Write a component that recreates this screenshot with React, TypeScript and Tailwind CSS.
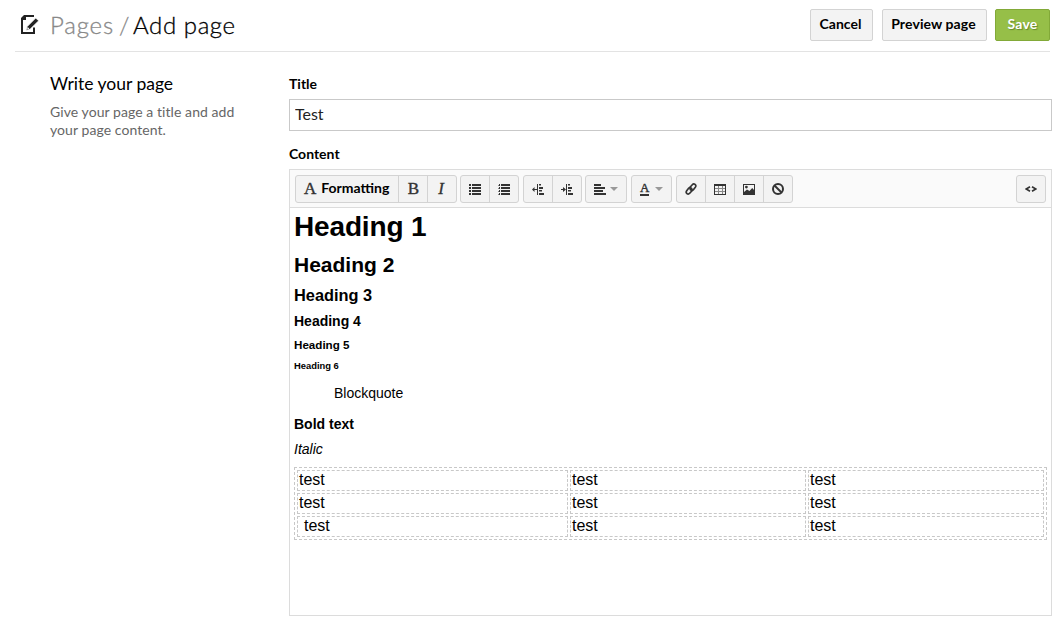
import type { ReactNode } from "react";

const ui = "font-['Lato',sans-serif]";

function Group({ children, className = "" }: { children: ReactNode; className?: string }) {
  return (
    <div className={`flex h-7 shrink-0 divide-x divide-[#d3d3d3] rounded-[3px] border border-[#d3d3d3] bg-[#f3f3f3] ${className}`}>
      {children}
    </div>
  );
}

function Tool({ children, label }: { children: ReactNode; label: string }) {
  return (
    <button aria-label={label} className="flex flex-1 items-center justify-center text-[#333]">
      {children}
    </button>
  );
}

function ListIcon({ numbered = false }: { numbered?: boolean }) {
  return (
    <svg width="12" height="11" viewBox="0 0 12 11" fill="#333" shapeRendering="crispEdges">
      {[0, 3, 6, 9].map((y) => (
        <g key={y}>
          <rect x={numbered ? 1 : 0} y={y} width={numbered ? 1 : 2} height="2" />
          {numbered && <rect x="0" y={y + 1} width="1" height="1" fill="#888" />}
          <rect x="3" y={y} width="9" height="2" />
        </g>
      ))}
    </svg>
  );
}

function IndentIcon({ right = false }: { right?: boolean }) {
  return (
    <svg width="12" height="11" viewBox="0 0 12 11" fill="#333">
      <path d="M5 0h1v11H5zM7 0h2v1.6H7zM7 3h4v2H7zM7 6h3v1.6H7zM7 9h5v2H7z" />
      <path d={right ? "M0 5h2V3l3 2.5L2 8V6H0z" : "M5 5H2.500V3L0 5.500 2.500 8V6H5z"} />
    </svg>
  );
}

function Caret() {
  return (
    <svg width="8" height="4" viewBox="0 0 8 4" fill="#999">
      <path d="M0 0h8L4 4z" />
    </svg>
  );
}

function Cell({ indent = false }: { indent?: boolean }) {
  return (
    <div className={`h-[21px] border border-dashed border-[#c8c8c8] text-base leading-[17px] ${indent ? "pl-[6px]" : "pl-px"}`}>
      test
    </div>
  );
}

export default function App() {
  return (
    <div className={`h-[621px] w-[1060px] overflow-hidden bg-white text-black ${ui}`}>
      <header className="ml-[15px] flex h-[52px] w-[1035px] items-start border-b border-[#e3e3e3]">
        <svg className="mt-[15px] ml-[5px]" width="20" height="20" viewBox="0 0 20 20">
          <path d="M14 1H5.500L2 4.500V18h12v-5.500" fill="none" stroke="#222" strokeWidth="2" />
          <path d="M1 0h5v5H1z" fill="#222" />
          <path d="M0 0h4L0 4z" fill="#fff" />
          <path d="M6 15.500l1.200-4L15.700 3l3 2.800-8.700 8.500z" fill="#222" stroke="#fff" strokeWidth=".8" />
          <path d="M7.700 12l1.700 1.700-2.300.8z" fill="#fff" />
        </svg>
        <h1 className="mt-[9px] ml-[10px] flex flex-1 text-2xl leading-8 font-light">
          <span className="w-[69px] tracking-[0.8px] text-[#888] [-webkit-text-stroke:0.3px_#888]">Pages</span>
          <span className="w-[14px] text-[#888] [-webkit-text-stroke:0.3px_#888]">/</span>
          <span className="tracking-[0.6px] [-webkit-text-stroke:0.3px_#000]">Add page</span>
        </h1>
        <div className="mt-[9px] flex text-sm leading-[28px] font-bold">
          <button className="mr-[9px] h-8 w-[63px] rounded-xs border border-[#d3d3d3] bg-[#f3f3f3] pr-[2px] pb-[2px]">Cancel</button>
          <button className="mr-2 h-8 w-[105px] rounded-xs border border-[#d3d3d3] bg-[#f3f3f3] pr-[2px] pb-[2px] tracking-[0.1px]">Preview page</button>
          <button className="h-8 w-[55px] rounded-xs border border-[#82a938] bg-[#96bf48] pb-[2px] tracking-[0.2px] text-white [text-shadow:1px_1px_1px_#67882c]">Save</button>
        </div>
      </header>
      <main className="flex">
        <aside className="ml-[50px] w-[239px] pt-[20px]">
          <h2 className="text-[17.5px] leading-6">Write your page</h2>
          <p className="mt-[7px] text-sm leading-[18px] tracking-[0.07px] text-[#666]">
            Give your page a title and add
            <br />
            your page content.
          </p>
        </aside>
        <section className="w-[763px] pt-[22px]">
          <label className="mb-px block h-6 text-sm leading-5 font-bold">Title</label>
          <input className="block h-8 w-full border border-[#c9c9c9] px-[5px] pb-[3px] text-base text-[#222]" defaultValue="Test" />
          <label className="mt-[13px] mb-px block h-6 text-sm leading-5 font-bold">Content</label>
          <div className="h-[447px] border border-[#dcdcdc]">
            <div className="flex h-[38px] items-start border-b border-[#dcdcdc] bg-[#fafafa] px-[5px] pt-[5px]">
              <Group className="mr-[3px] w-[162px]">
                <button className="flex w-[103px] items-center pl-2 text-sm font-bold">
                  <span className="mr-[5px] font-['Liberation_Serif',serif] text-[17px] font-normal text-[#333] [-webkit-text-stroke:0.4px_#333]">A</span>
                  <span className="pb-[2px]">Formatting</span>
                </button>
                <Tool label="Bold"><span className="ml-px font-['Liberation_Serif',serif] text-[17px] [-webkit-text-stroke:0.4px_#333]">B</span></Tool>
                <Tool label="Italic"><span className="mr-[2px] font-['Liberation_Serif',serif] text-[17px] italic [-webkit-text-stroke:0.3px_#333]">I</span></Tool>
              </Group>
              <Group className="mr-1 w-[59px]">
                <Tool label="Bulleted list"><ListIcon /></Tool>
                <Tool label="Numbered list"><ListIcon numbered /></Tool>
              </Group>
              <Group className="mr-[3px] w-[59px]">
                <Tool label="Outdent"><IndentIcon /></Tool>
                <Tool label="Indent"><IndentIcon right /></Tool>
              </Group>
              <Group className="mr-1 w-[42px]">
                <Tool label="Alignment">
                  <svg className="mr-1" width="12" height="11" fill="#333" shapeRendering="crispEdges">
                    <path d="M0 0h7v2H0zM0 3h11v2H0zM0 6h9v2H0zM0 9h12v2H0z" />
                  </svg>
                  <Caret />
                </Tool>
              </Group>
              <Group className="mr-1 w-[41px]">
                <Tool label="Text colour">
                  <span className="mr-[6px] h-[13px] w-[9px] border-b-2 border-[#333] text-center font-['Liberation_Serif',serif] text-[13px] leading-[10px] [-webkit-text-stroke:0.4px_#333]">A</span>
                  <Caret />
                </Tool>
              </Group>
              <Group className="w-[117px]">
                <Tool label="Link">
                  <svg width="12" height="12" viewBox="0 0 12 12" fill="none" stroke="#333" strokeWidth="1.7" strokeLinecap="round">
                    <path d="M5 4.300l2.300-2.600c1.700-1.900 4.600.3 3 2.600L8.400 6.700c-1.200 1.300-3.400.4-3.300-1.200" />
                    <path d="M7 7.700l-2.300 2.600c-1.700 1.900-4.600-.3-3-2.600l1.900-2.400c1.200-1.300 3.400-.4 3.300 1.200" />
                  </svg>
                </Tool>
                <Tool label="Table">
                  <svg width="12" height="11" shapeRendering="crispEdges">
                    <path d="M0 0h12v11H0z" fill="#333" />
                    <path d="M1 2h10v8H1z" fill="#888" />
                    <path d="M1 2h3v2H1zM5 2h3v2H5zM9 2h2v2H9zM1 5h3v2H1zM5 5h3v2H5zM9 5h2v2H9zM1 8h3v2H1zM5 8h3v2H5zM9 8h2v2H9z" fill="#f3f3f3" />
                  </svg>
                </Tool>
                <Tool label="Image">
                  <svg width="12" height="11" viewBox="0 0 12 11">
                    <path d="M0 0h12v11H0z" fill="#333" />
                    <path d="M1 1h10v5L9.200 4 6.500 7 4 5.500 1 8z" fill="#f3f3f3" />
                    <circle cx="3.400" cy="3.100" r="1.400" fill="#333" />
                  </svg>
                </Tool>
                <Tool label="Clear formatting">
                  <svg width="12" height="12" viewBox="0 0 12 12" fill="none" stroke="#333" strokeWidth="2">
                    <circle cx="6" cy="6" r="5" />
                    <path d="M2.500 2.500l7 7" />
                  </svg>
                </Tool>
              </Group>
              <Group className="ml-auto w-[30px]">
                <Tool label="Source">
                  <svg width="12" height="6" viewBox="0 0 12 6" fill="none" stroke="#333" strokeWidth="1.600">
                    <path d="M5 .7L1.200 3 5 5.300M7 .7L10.800 3 7 5.300" />
                  </svg>
                </Tool>
              </Group>
            </div>
            <article className="px-1 font-['Liberation_Sans',sans-serif] text-sm">
              <h1 className="mt-[3px] text-[28px] leading-8 font-bold tracking-[-0.15px]">Heading 1</h1>
              <h2 className="mt-[9px] text-[21px] leading-[26px] font-bold">Heading 2</h2>
              <h3 className="mt-[7px] text-[16.38px] leading-5 font-bold">Heading 3</h3>
              <h4 className="mt-[7px] leading-[18px] font-bold">Heading 4</h4>
              <h5 className="mt-[7px] text-[11.62px] leading-4 font-bold">Heading 5</h5>
              <h6 className="mt-[6px] text-[9.38px] leading-[14px] font-bold">Heading 6</h6>
              <blockquote className="mt-[11px] ml-10 leading-[18px]">Blockquote</blockquote>
              <p className="mt-[13px] leading-[18px] font-bold">Bold text</p>
              <p className="mt-[7px] leading-[18px] italic">Italic</p>
              <div className="mt-[9px] grid w-[753px] grid-cols-[271px_236px_236px] gap-[2px] border border-dashed border-[#c8c8c8] p-[2px]">
                <Cell /><Cell /><Cell />
                <Cell /><Cell /><Cell />
                <Cell indent /><Cell /><Cell />
              </div>
            </article>
          </div>
        </section>
      </main>
    </div>
  );
}
